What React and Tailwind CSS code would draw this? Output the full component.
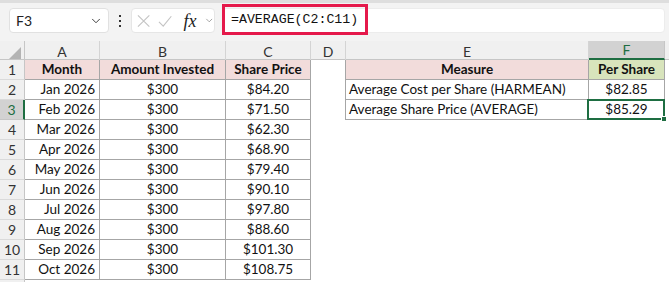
import React from "react";
import { ChevronDown } from "lucide-react";

const rows = [
  ["Jan 2026", "$84.20"],
  ["Feb 2026", "$71.50"],
  ["Mar 2026", "$62.30"],
  ["Apr 2026", "$68.90"],
  ["May 2026", "$79.40"],
  ["Jun 2026", "$90.10"],
  ["Jul 2026", "$97.80"],
  ["Aug 2026", "$88.60"],
  ["Sep 2026", "$101.30"],
  ["Oct 2026", "$108.75"],
];

const measures = [
  ["Average Cost per Share (HARMEAN)", "$82.85"],
  ["Average Share Price (AVERAGE)", "$85.29"],
];

const cols = "grid grid-cols-[25px_75px_126px_85px_35px_243px_76px_4px]";
const cell = "h-[20px] flex items-center whitespace-nowrap border-r border-b border-[#a6a6a6] leading-none pt-[1px]";

const FormulaBar = () => (
  <div className="h-[41px] bg-[#f3f3f3] border-t-[3px] border-[#dedede] flex items-start pt-[5px] pl-[9px]">
    <div className="w-[100px] h-[25px] bg-white border border-[#e1e1e1] rounded-[4px] flex items-center justify-between pl-[6px] pr-[5px] text-[14px] text-[#222]">
      <span>F3</span>
      <ChevronDown size={14} strokeWidth={1.6} className="text-[#333]" />
    </div>
    <div className="w-[22px] h-[25px] flex flex-col items-center justify-center gap-[3px]">
      <span className="w-[2px] h-[2px] bg-[#333]" />
      <span className="w-[2px] h-[2px] bg-[#333]" />
      <span className="w-[2px] h-[2px] bg-[#333]" />
    </div>
    <div className="w-[84px] h-[25px] bg-white border border-[#e6e6e6] rounded-[4px] flex items-center pl-[5px]">
      <svg width="14" height="14" viewBox="0 0 14 14" className="text-[#c4c4c4]">
        <path d="M1 1 13 13M13 1 1 13" stroke="currentColor" strokeWidth="1.2" fill="none" />
      </svg>
      <svg width="15" height="14" viewBox="0 0 15 14" className="ml-[8px] text-[#c4c4c4]">
        <path d="M1 8 5.5 12.5 14 2" stroke="currentColor" strokeWidth="1.2" fill="none" />
      </svg>
      <span className="ml-[11px] italic text-[18px] text-[#222] leading-none" style={{ fontFamily: '"Liberation Serif", serif' }}>
        fx
      </span>
      <ChevronDown size={11} strokeWidth={1.5} className="ml-[7px] text-[#777]" />
    </div>
    <div className="relative ml-[7px] w-[443px] h-[25px] bg-white border border-[#ececec] rounded-[4px]">
      <div className="absolute left-[-1px] top-[-5px] w-[146px] h-[31px] border-[3px] border-[#e5194b] flex items-center pl-[6px]">
        <span className="text-[13.25px] text-[#111]" style={{ fontFamily: '"Liberation Mono", monospace' }}>
          =AVERAGE(C2:C11)
        </span>
      </div>
    </div>
  </div>
);

const HeaderRow = () => {
  const letters = ["A", "B", "C", "D", "E", "F"];
  return (
    <div className={`${cols} h-[19px] bg-[#f0f0f0] border-b border-[#c6c6c6] text-[14px] text-[#333]`}>
      <div className="border-r border-[#c6c6c6] flex items-end justify-end pr-[3px] pb-[3px]">
        <svg width="12" height="12" viewBox="0 0 12 12">
          <polygon points="12,0 12,12 0,12" fill="#b3b3b3" />
        </svg>
      </div>
      {letters.map((l) =>
        l === "F" ? (
          <div key={l} className="bg-[#d2d2d2] text-[#1e6e42] border-b-2 border-[#1e6e42] border-r border-r-[#c6c6c6] flex items-center justify-center h-[19px]">
            {l}
          </div>
        ) : (
          <div key={l} className="border-r border-[#d4d4d4] flex items-center justify-center">
            {l}
          </div>
        )
      )}
      <div />
    </div>
  );
};

const RowHead = ({ n }) =>
  n === 3 ? (
    <div className="h-[20px] bg-[#d2d2d2] text-[#1e6e42] border-r-2 border-[#1e6e42] border-b border-b-[#c6c6c6] flex items-center justify-center text-[14px]">
      {n}
    </div>
  ) : (
    <div className="h-[20px] bg-[#f0f0f0] text-[#333] border-r border-[#c6c6c6] border-b border-b-[#dadada] flex items-center justify-center text-[14px]">
      {n}
    </div>
  );

export default function App() {
  return (
    <div className="w-[669px] h-[282px] overflow-hidden bg-white text-[#111]" style={{ fontFamily: 'Lato, "Noto Sans", sans-serif' }}>
      <FormulaBar />
      <HeaderRow />
      <div className="text-[13.5px]">
        {/* row 1: headings */}
        <div className={cols}>
          <RowHead n={1} />
          <div className={`${cell} bg-[#f2dcdb] justify-center font-bold`}>Month</div>
          <div className={`${cell} bg-[#f2dcdb] justify-center font-bold`}>Amount Invested</div>
          <div className={`${cell} bg-[#f2dcdb] justify-center font-bold`}>Share Price</div>
          <div className="h-[20px] border-r border-[#a6a6a6]" />
          <div className={`${cell} bg-[#f2dcdb] justify-center font-bold`}>Measure</div>
          <div className={`${cell} bg-[#d8e4bc] justify-center font-bold`}>Per Share</div>
          <div />
        </div>
        {rows.map(([m, p], i) => {
          const n = i + 2;
          const meas = measures[i];
          return (
            <div key={n} className={cols}>
              <RowHead n={n} />
              <div className={`${cell} justify-end pr-[4px]`}>{m}</div>
              <div className={`${cell} justify-center`}>$300</div>
              <div className={`${cell} justify-center`}>{p}</div>
              <div className={`h-[20px] ${meas ? "border-r border-[#a6a6a6]" : ""}`} />
              {meas ? (
                <>
                  <div className={`${cell} pl-[3px]`}>{meas[0]}</div>
                  <div className={`${cell} justify-center relative`}>
                    {meas[1]}
                    {n === 3 && (
                      <div className="absolute left-[-2px] top-[-1px] w-[78px] h-[21px] border-2 border-[#1e6e42]">
                        <div className="absolute right-[-4px] bottom-[-4px] w-[6px] h-[6px] bg-[#1e6e42] border border-white" />
                      </div>
                    )}
                  </div>
                </>
              ) : (
                <>
                  <div className="h-[20px]" />
                  <div className="h-[20px]" />
                </>
              )}
              <div />
            </div>
          );
        })}
        <div className={cols}>
          <div className="h-[2px] bg-[#f0f0f0] border-r border-[#c6c6c6]" />
        </div>
      </div>
    </div>
  );
}
